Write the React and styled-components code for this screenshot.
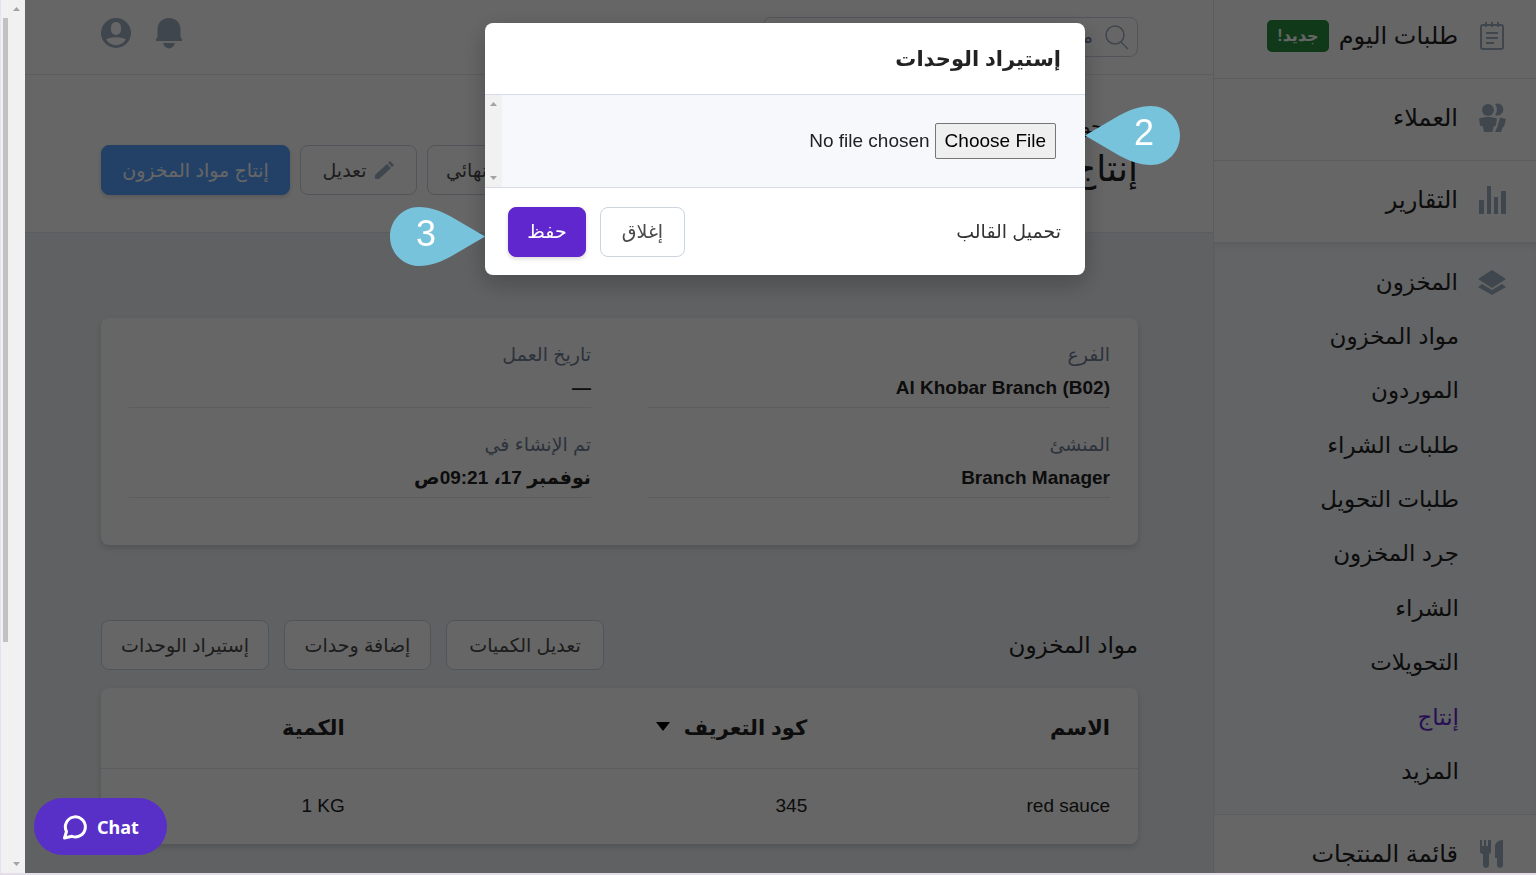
import React from "react";
import styled, { createGlobalStyle } from "styled-components";

const FONT = '"Liberation Sans", "DejaVu Sans", sans-serif';

const NAV_TOP = [
  { label: "طلبات اليوم", icon: "orders", badge: "جديد!" },
  { label: "العملاء", icon: "users" },
  { label: "التقارير", icon: "chart" },
];

const SUB_ITEMS = [
  "مواد المخزون",
  "الموردون",
  "طلبات الشراء",
  "طلبات التحويل",
  "جرد المخزون",
  "الشراء",
  "التحويلات",
  "إنتاج",
  "المزيد",
];

const DETAILS = [
  { label: "الفرع", value: "Al Khobar Branch (B02)" },
  { label: "تاريخ العمل", value: "—" },
  { label: "المنشئ", value: "Branch Manager" },
  { label: "تم الإنشاء في", value: "نوفمبر 17، 09:21ص" },
];

function NavIcon({ name }) {
  return (
    <NavSvg viewBox="0 0 28 30" aria-hidden="true">
      {name === "orders" && (
        <g fill="none" stroke="currentColor" strokeWidth="2">
          <rect x="3" y="4" width="22" height="24" rx="2" />
          <path d="M8 1v5M14 1v5M20 1v5M8 12h12M8 17h12M8 22h8" />
        </g>
      )}
      {name === "users" && (
        <g fill="currentColor">
          <circle cx="10" cy="7" r="6" />
          <path d="M17 1a6 6 0 1 1 0 11c2.5-3 2.5-8 0-11z" />
          <path d="M1 15.5c5-2 13-2 18 0l-1 7-2.5 1-1 5.500H6l-1-5.500-3-1z" />
          <path d="M22 14.500l6 1.500-2 7.500-1.500 1-1.500 4.500h-6l2.500-5.500z" />
        </g>
      )}
      {name === "chart" && (
        <g fill="currentColor">
          <path d="M1 15h5v14H1zM9 1h4v28H9zM16 12h4v17h-4zM23 6h5v23h-5z" />
        </g>
      )}
      {name === "layers" && (
        <g fill="currentColor">
          <path d="M14 2l14 9-14 9L0 11z" />
          <path d="M4 16l10 6 10-6 4 3-14 8L0 19z" />
        </g>
      )}
      {name === "menu" && (
        <g fill="currentColor">
          <path d="M2 1h2v6h2V1h2v6h2V1h3v11c0 2-1 3-2 3v12q-3 4-6 0V15c-2 0-3-1-3-3z" />
          <path d="M25 1v26q-3 4-6 0v-8h-2V8c0-4 3-7 8-7z" />
        </g>
      )}
    </NavSvg>
  );
}

function Arrow({ down }) {
  return (
    <ArrowSvg viewBox="0 0 7 4" aria-hidden="true">
      <path d={down ? "M0 0h7L3.5 4z" : "M0 4h7L3.5 0z"} fill="#a3a3a3" />
    </ArrowSvg>
  );
}

function Pin({ number, side }) {
  return (
    <PinWrap $side={side}>
      <PinSvg viewBox="0 0 95 59" $flip={side === "right"} aria-hidden="true">
        <path
          d="M95 29.5L66 12.5C52 4 40 0 29 0C13 0 0 13 0 29.5S13 59 29 59C40 59 52 55 66 46.5Z"
          fill="#78c3dc"
        />
      </PinSvg>
      <PinNumber $side={side}>{number}</PinNumber>
    </PinWrap>
  );
}

function Sidebar() {
  return (
    <SidebarWrap>
      <NavList>
        {NAV_TOP.map((item) => (
          <NavRow key={item.icon} href="#">
            <NavIcon name={item.icon} />
            {item.label}
            {item.badge && <Badge>{item.badge}</Badge>}
          </NavRow>
        ))}
        <NavGroup>
          <GroupHead href="#">
            <NavIcon name="layers" />
            المخزون
          </GroupHead>
          <SubList>
            {SUB_ITEMS.map((label) => (
              <SubItem key={label} href="#" $active={label === "إنتاج"}>
                {label}
              </SubItem>
            ))}
          </SubList>
        </NavGroup>
        <NavRow href="#">
          <NavIcon name="menu" />
          قائمة المنتجات
        </NavRow>
      </NavList>
    </SidebarWrap>
  );
}

function TopBar() {
  return (
    <TopBarWrap>
      <SearchBox>
        <svg width="24" height="26" viewBox="0 0 24 26" aria-hidden="true">
          <g fill="none" stroke="#a0aec0" strokeWidth="1.5">
            <circle cx="10" cy="11" r="9" />
            <path d="M16 18l7 7" />
          </g>
        </svg>
        <SearchInput aria-label="بحث" placeholder="ما الذي تبحث عنه؟" />
      </SearchBox>
      <TopIcons>
        <IconButton aria-label="الإشعارات">
          <svg width="28" height="32" viewBox="0 0 28 32">
            <g fill="#a0aec0">
              <path d="M14 1C7 1 2.5 6 2.5 12v8L1 22v2h26v-2l-1.5-2v-8C25.5 6 21 1 14 1z" />
              <path d="M8 26h12c-1 3-3 5.500-6 5.500S9 29 8 26z" />
            </g>
          </svg>
        </IconButton>
        <IconButton aria-label="الحساب">
          <svg width="30" height="30" viewBox="0 0 30 30">
            <circle cx="15" cy="15" r="15" fill="#a0aec0" />
            <rect x="10" y="4" width="10" height="13" rx="5" fill="#fff" />
            <path d="M5 21.5c5-3 15-3 20 0-5 7.500-15 7.500-20 0z" fill="#fff" />
          </svg>
        </IconButton>
      </TopIcons>
    </TopBarWrap>
  );
}

function ImportModal() {
  return (
    <Overlay>
      <Dialog role="dialog" aria-labelledby="import-title">
        <DialogHeader>
          <DialogTitle id="import-title">إستيراد الوحدات</DialogTitle>
        </DialogHeader>
        <DialogBody>
          <FileArea>
            <FileInput type="file" aria-label="إستيراد الوحدات" />
          </FileArea>
          <BodyScroll>
            <Arrow />
            <Arrow down />
          </BodyScroll>
        </DialogBody>
        <DialogFooter>
          <TemplateLink href="#">تحميل القالب</TemplateLink>
          <FooterActions>
            <Button $minWidth="85px">إغلاق</Button>
            <Button $minWidth="78px" $color="#5f27cd">
              حفظ
            </Button>
          </FooterActions>
        </DialogFooter>
        <Pin number="2" side="right" />
        <Pin number="3" side="left" />
      </Dialog>
    </Overlay>
  );
}

export default function App() {
  return (
    <>
      <GlobalStyle />
      <Frame dir="rtl">
        <Sidebar />
        <Main>
          <TopBar />
          <PageHead>
            <div>
              <BackLink href="#">
                <svg width="12" height="14" viewBox="0 0 12 14">
                  <path
                    d="M4 1l6 6-6 6"
                    fill="none"
                    stroke="#4a5568"
                    strokeWidth="2"
                  />
                </svg>
                رجوع
              </BackLink>
              <PageTitle>إنتاج</PageTitle>
            </div>
            <HeadActions>
              <Button>حفظ نهائي</Button>
              <Button $minWidth="117px">
                <svg width="20" height="18" viewBox="0 0 20 18">
                  <path
                    d="M0 18v-4L12 3l4 4L4 18zM13 2l2-2 4 4-2 2z"
                    fill="#a0aec0"
                  />
                </svg>
                تعديل
              </Button>
              <Button $minWidth="189px" $color="#57a2ff">
                إنتاج مواد المخزون
              </Button>
            </HeadActions>
          </PageHead>
          <Content>
            <DetailsCard>
              {DETAILS.map((d) => (
                <Detail key={d.label}>
                  <DetailLabel>{d.label}</DetailLabel>
                  <DetailValue>{d.value}</DetailValue>
                </Detail>
              ))}
            </DetailsCard>
            <SectionHead>
              <SectionTitle>مواد المخزون</SectionTitle>
              <SectionActions>
                <Button $minWidth="158px">تعديل الكميات</Button>
                <Button $minWidth="147px">إضافة وحدات</Button>
                <Button $minWidth="168px">إستيراد الوحدات</Button>
              </SectionActions>
            </SectionHead>
            <TableCard>
              <Table>
                <thead>
                  <tr>
                    <Th $width="29.2%">الاسم</Th>
                    <Th $width="44.6%">
                      كود التعريف
                      <SortSvg viewBox="0 0 14 9" aria-hidden="true">
                        <path d="M0 0h14L7 9z" />
                      </SortSvg>
                    </Th>
                    <Th>الكمية</Th>
                  </tr>
                </thead>
                <tbody>
                  <tr>
                    <Td>red sauce</Td>
                    <Td>345</Td>
                    <Td>
                      <bdi>1 KG</bdi>
                    </Td>
                  </tr>
                </tbody>
              </Table>
            </TableCard>
          </Content>
        </Main>
        <Gutter>
          <OuterTrack>
            <Arrow />
            <Arrow down />
          </OuterTrack>
          <InnerTrack>
            <Thumb />
          </InnerTrack>
        </Gutter>
        <ImportModal />
        <ChatButton dir="ltr">
          <svg width="26" height="26" viewBox="0 0 26 26" aria-hidden="true">
            <path
              d="M4.5 17.5A10 10 0 1 1 10 22.3L2.5 24Z"
              fill="none"
              stroke="#fff"
              strokeWidth="3"
              strokeLinejoin="round"
            />
          </svg>
          Chat
        </ChatButton>
      </Frame>
    </>
  );
}

const GlobalStyle = createGlobalStyle`
  * {
    box-sizing: border-box;
  }
  body {
    margin: 0;
    font-family: ${FONT};
    font-size: 19px;
    color: #222;
  }
  a {
    color: inherit;
    text-decoration: none;
  }
  button, input {
    font: inherit;
  }
  svg {
    flex: none;
  }
`;

const Frame = styled.div`
  display: flex;
  height: 100vh;
  overflow: hidden;
  border-bottom: 2px solid #e3dde9;
  background: #edf2f7;
`;

const SidebarWrap = styled.aside`
  flex: none;
  width: 323px;
  overflow: hidden;
  background: #fff;
  border-left: 1px solid #e2e8f0;
`;

/* the menu is scrolled a touch, so its first row is cut at the top */
const NavList = styled.nav`
  margin-top: -3px;
`;

const NavRow = styled.a`
  display: flex;
  align-items: center;
  gap: 20px;
  height: 82px;
  padding-right: 30px;
  padding-bottom: 3px;
  border-bottom: 1px solid #e2e8f0;
  font-size: 24px;
`;

const NavSvg = styled.svg`
  width: 28px;
  height: 30px;
  color: #a0aec0;
`;

const Badge = styled.span`
  margin-right: -10px;
  padding: 0 10px;
  border-radius: 5px;
  background: #28903f;
  color: #fff;
  font-size: 16px;
  font-weight: bold;
  line-height: 32px;
`;

const NavGroup = styled.div`
  padding-bottom: 15px;
  background: #f7fafc;
  border-bottom: 1px solid #e2e8f0;
  box-shadow: inset 0 4px 6px -2px rgba(0, 0, 0, 0.08);
`;

const GroupHead = styled.a`
  display: flex;
  align-items: center;
  gap: 20px;
  height: 66px;
  padding: 13px 30px 0 0;
  font-size: 23px;
`;

const SubList = styled.div`
  display: grid;
  grid-auto-rows: 1fr;
  min-height: 490px;
  padding-right: 77px;
`;

const SubItem = styled.a`
  display: flex;
  align-items: center;
  font-size: 23px;
  color: ${(props) => (props.$active ? "#5f27cd" : "inherit")};
`;

const Main = styled.main`
  flex: 1;
  min-width: 0;
  overflow: hidden;
`;

const TopBarWrap = styled.header`
  display: flex;
  justify-content: space-between;
  align-items: center;
  height: 75px;
  padding: 0 75px 0 76px;
  background: #fff;
  border-bottom: 1px solid #e2e8f0;
`;

const SearchBox = styled.label`
  display: flex;
  align-items: center;
  gap: 10px;
  width: 375px;
  height: 40px;
  padding: 0 8px;
  border: 1px solid #cbd5e0;
  border-radius: 8px;
`;

const SearchInput = styled.input`
  flex: 1;
  min-width: 0;
  border: 0;
  outline: 0;
  background: none;
  &::placeholder {
    color: #718096;
    opacity: 1;
  }
`;

const TopIcons = styled.div`
  display: flex;
  align-items: center;
  gap: 24px;
  padding-bottom: 8px;
`;

const IconButton = styled.button`
  display: flex;
  padding: 0;
  border: 0;
  background: none;
`;

const PageHead = styled.div`
  display: flex;
  justify-content: space-between;
  align-items: flex-start;
  height: 158px;
  padding: 40px 75px 0 76px;
  background: #fff;
  border-bottom: 1px solid #e2e8f0;
`;

const BackLink = styled.a`
  display: flex;
  align-items: center;
  gap: 14px;
  line-height: 24px;
`;

const PageTitle = styled.h1`
  margin: 0;
  padding-top: 6px;
  font-size: 36px;
  font-weight: normal;
  line-height: 48px;
`;

const HeadActions = styled.div`
  display: flex;
  gap: 10px;
  margin-top: 30px;
`;

const Button = styled.button`
  display: flex;
  align-items: center;
  justify-content: center;
  gap: 8px;
  min-width: ${(props) => props.$minWidth || "0"};
  height: 50px;
  padding: 0 18px;
  border: 1px solid ${(props) => props.$color || "#cbd5e0"};
  border-radius: 8px;
  background: ${(props) => props.$color || "#fff"};
  color: ${(props) => (props.$color ? "#fff" : "#4a4a4a")};
  box-shadow: ${(props) =>
    props.$color ? "0 2px 4px rgba(0, 0, 0, 0.15)" : "none"};
  white-space: nowrap;
`;

const Content = styled.div`
  padding: 85px 75px 0 76px;
`;

const Card = styled.section`
  background: #fff;
  border-radius: 8px;
  box-shadow: 0 3px 6px rgba(0, 0, 0, 0.15);
`;

const DetailsCard = styled(Card)`
  display: grid;
  grid-template-columns: 1fr 1fr;
  gap: 20px 57px;
  padding: 20px 28px 47px;
`;

const Detail = styled.div`
  padding-bottom: 3px;
  border-bottom: 1px solid #e2e8f0;
`;

const DetailLabel = styled.div`
  color: #718096;
  line-height: 34px;
`;

const DetailValue = styled.div`
  font-weight: bold;
  line-height: 32px;
`;

const SectionHead = styled.div`
  display: flex;
  justify-content: space-between;
  align-items: center;
  margin: 75px 0 18px;
`;

const SectionTitle = styled.h2`
  margin: 0;
  font-size: 23px;
  font-weight: normal;
`;

const SectionActions = styled.div`
  display: flex;
  gap: 15px;
`;

const TableCard = styled(Card)`
  overflow: hidden;
`;

const Table = styled.table`
  width: 100%;
  table-layout: fixed;
  border-collapse: collapse;
  text-align: right;
`;

const Th = styled.th`
  width: ${(props) => props.$width || "auto"};
  height: 80px;
  padding: 0 28px;
  border-bottom: 1px solid #e2e8f0;
  font-size: 21px;
`;

const Td = styled.td`
  height: 76px;
  padding: 0 28px;
`;

const SortSvg = styled.svg`
  width: 14px;
  height: 9px;
  margin-right: 14px;
  vertical-align: 4px;
`;

const Gutter = styled.div`
  display: flex;
  flex: none;
  width: 25px;
  background: #f1f1f1;
  border-left: 1px solid #dfe3f2;
`;

const OuterTrack = styled.div`
  display: flex;
  flex-direction: column;
  justify-content: space-between;
  align-items: center;
  width: 17px;
  padding: 7px 0;
`;

const InnerTrack = styled.div`
  width: 5px;
  padding-top: 18px;
`;

const Thumb = styled.div`
  height: 73%;
  background: #c1c1c1;
`;

const ArrowSvg = styled.svg`
  width: 7px;
  height: 4px;
`;

const Overlay = styled.div`
  position: fixed;
  inset: 0 0 2px 25px;
  padding: 23px 0 0 9px;
  background: rgba(0, 0, 0, 0.6);
`;

const Dialog = styled.div`
  position: relative;
  width: 600px;
  margin: 0 auto;
  border-radius: 8px;
  background: #fff;
  box-shadow: 0 8px 24px rgba(0, 0, 0, 0.25);
`;

const DialogHeader = styled.div`
  display: flex;
  align-items: center;
  height: 72px;
  padding: 0 24px;
  border-bottom: 1px solid #d5dbe9;
`;

const DialogTitle = styled.h2`
  margin: 0;
  font-size: 21px;
`;

const DialogBody = styled.div`
  display: flex;
  height: 93px;
  background: #f7f8fc;
  border-bottom: 1px solid #d5dbe9;
`;

const FileArea = styled.div`
  flex: 1;
  padding: 28px 29px;
`;

const FileInput = styled.input`
  display: block;
  width: 100%;
  &::file-selector-button {
    height: 36px;
    margin: 0 0 0 5px;
    padding: 0 9px;
    border: 1px solid #767676;
    border-radius: 2px;
    background: #efefef;
    color: #000;
    font: inherit;
  }
`;

const BodyScroll = styled.div`
  display: flex;
  flex-direction: column;
  justify-content: space-between;
  align-items: center;
  width: 17px;
  padding: 7px 0;
  background: #f1f1f1;
`;

const DialogFooter = styled.div`
  display: flex;
  justify-content: space-between;
  align-items: center;
  height: 87px;
  padding: 0 24px 0 23px;
`;

const TemplateLink = styled.a`
  color: #333;
`;

const FooterActions = styled.div`
  display: flex;
  gap: 14px;
`;

const PinWrap = styled.div`
  position: absolute;
  top: ${(props) => (props.$side === "right" ? "83px" : "184px")};
  ${(props) => (props.$side === "right" ? "left" : "right")}: 100%;
  width: 95px;
  height: 59px;
`;

const PinSvg = styled.svg`
  display: block;
  width: 95px;
  height: 59px;
  transform: ${(props) => (props.$flip ? "scaleX(-1)" : "none")};
`;

const PinNumber = styled.span`
  position: absolute;
  top: 0;
  ${(props) => (props.$side === "right" ? "right" : "left")}: 0;
  width: 72px;
  color: #fff;
  font-size: 36px;
  line-height: 54px;
  text-align: center;
`;

const ChatButton = styled.button`
  position: fixed;
  left: 34px;
  bottom: 20px;
  display: flex;
  align-items: center;
  justify-content: center;
  gap: 9px;
  width: 133px;
  height: 57px;
  border: 0;
  border-radius: 29px;
  background: #582fc7;
  color: #fff;
  font-family: "Noto Sans", sans-serif;
  font-size: 18px;
  font-weight: bold;
`;
